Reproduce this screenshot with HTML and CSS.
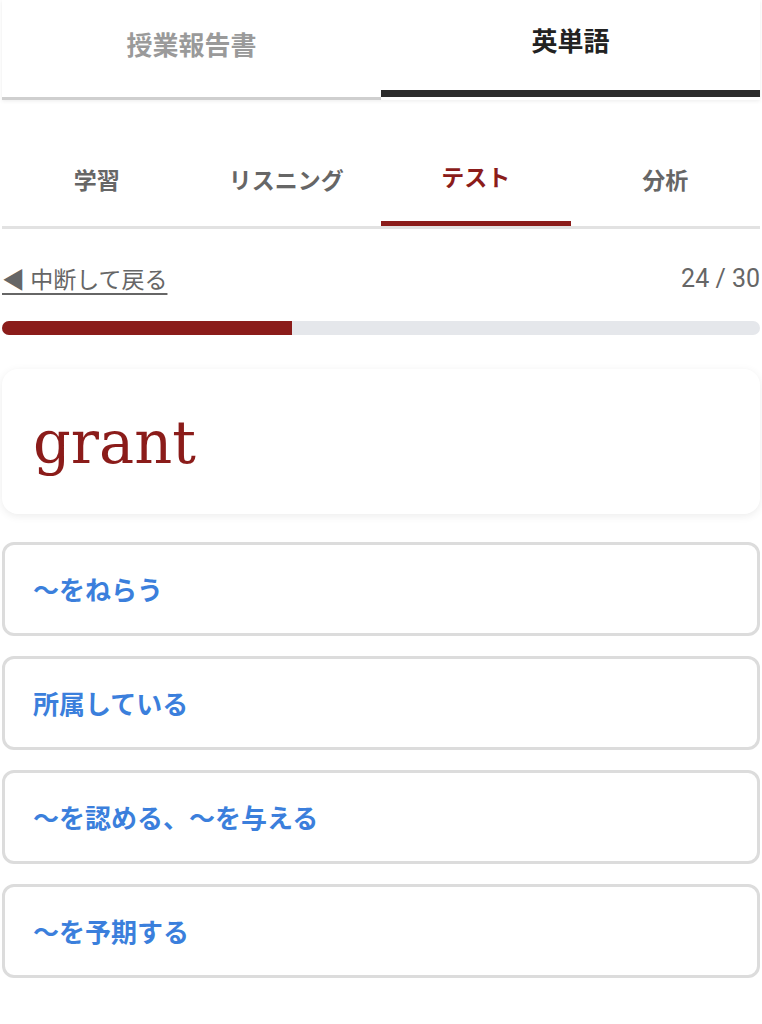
FILE: index.html
```html
<!DOCTYPE html>
<html lang="ja">
<head>
<meta charset="utf-8">
<link rel="stylesheet" href="styles.css">
</head>
<body>
<div class="page">
  <header class="main-tabs">
    <div class="main-tab">授業報告書</div>
    <div class="main-tab active">英単語</div>
  </header>
  <nav class="sub-tabs">
    <div class="sub-tab">学習</div>
    <div class="sub-tab">リスニング</div>
    <div class="sub-tab active">テスト</div>
    <div class="sub-tab">分析</div>
  </nav>
  <div class="status-row">
    <a class="back-link">◀ 中断して戻る</a>
    <span class="counter">24 / 30</span>
  </div>
  <div class="progress"><div class="progress-fill" style="width: 38.3%"></div></div>
  <div class="word-card"><span class="word">grant</span></div>
  <div class="options">
    <div class="option">〜をねらう</div>
    <div class="option">所属している</div>
    <div class="option">〜を認める、〜を与える</div>
    <div class="option">〜を予期する</div>
  </div>
</div>
</body>
</html>
```
FILE: styles.css
```css
* { box-sizing: border-box; }
html, body { margin: 0; padding: 0; background: #fff; }
body {
  font-family: "Noto Sans CJK JP", "Noto Sans", sans-serif;
  width: 762px;
  height: 1024px;
  overflow: hidden;
}
.page { padding: 0 2px; }

.main-tabs {
  display: flex;
  height: 100px;
  align-items: flex-start;
  box-shadow: 0 1px 4px rgba(0,0,0,0.08);
}
.main-tab {
  flex: 1;
  text-align: center;
  font-size: 26px;
  font-weight: 700;
  color: #9a9a9a;
  line-height: 34px;
  padding-top: 27px;
  height: 100px;
  border-bottom: 3px solid #cfcfcf;
}
.main-tab.active {
  color: #222;
  padding-top: 23px;
  height: 97px;
  border-bottom: 7px solid #2c2c2c;
}

.sub-tabs {
  display: flex;
  border-bottom: 3px solid #e2e2e2;
}
.sub-tab {
  flex: 1;
  text-align: center;
  font-size: 23px;
  font-weight: 700;
  color: #666;
  line-height: 30px;
  padding-top: 64px;
  padding-bottom: 27px;
  border-bottom: 5px solid transparent;
}
.sub-tab.active {
  color: #8b1c1a;
  padding-top: 61px;
  padding-bottom: 30px;
  border-bottom-color: #8b1c1a;
}

.status-row {
  display: flex;
  justify-content: space-between;
  align-items: center;
  margin-top: 35px;
  height: 28px;
}
.back-link {
  font-size: 23px;
  color: #666;
  text-decoration: underline;
  text-underline-offset: 5px;
  text-decoration-thickness: 2px;
}
.counter {
  font-family: Roboto, "Liberation Sans", sans-serif;
  font-size: 25px;
  color: #666;
}

.progress {
  margin-top: 29px;
  height: 14px;
  background: #e5e7eb;
  border-radius: 7px;
  overflow: hidden;
}
.progress-fill {
  height: 100%;
  background: #8b1c1a;
}

.word-card {
  margin-top: 34px;
  height: 145px;
  background: #fff;
  border-radius: 16px;
  box-shadow: 0 2px 8px rgba(0,0,0,0.08);
  display: flex;
  align-items: center;
  padding-left: 31px;
}
.word {
  font-family: "DejaVu Serif", serif;
  font-size: 59px;
  color: #8b1c1a;
  line-height: 1;
  margin-top: 2px;
}

.options {
  margin-top: 28px;
  display: flex;
  flex-direction: column;
  gap: 20.5px;
}
.option {
  height: 93.5px;
  border: 3px solid #dcdcdc;
  border-radius: 12px;
  display: flex;
  align-items: center;
  padding-left: 28px;
  font-size: 26px;
  font-weight: 700;
  color: #3b7fdc;
}
```
